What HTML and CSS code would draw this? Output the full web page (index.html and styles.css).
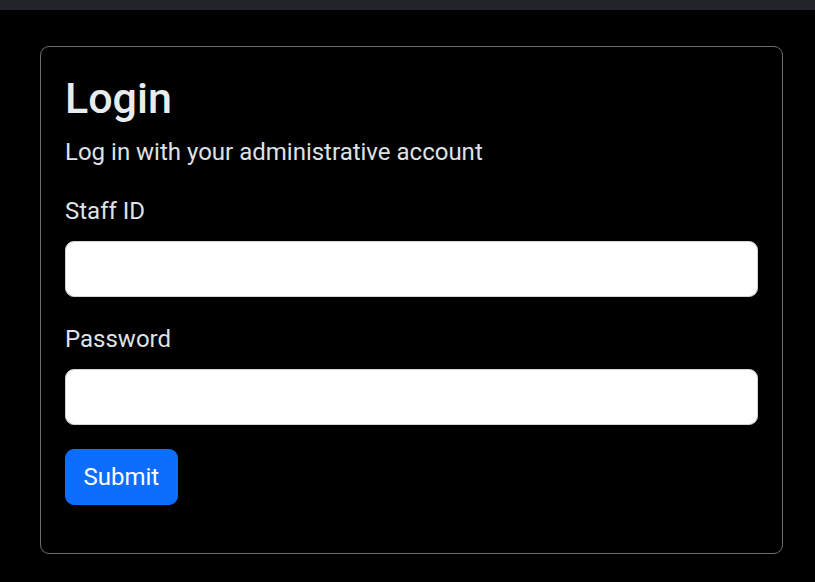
FILE: index.html
```html
<!DOCTYPE html>
<html lang="en">
<head>
<meta charset="utf-8">
<title>Login</title>
<link rel="stylesheet" href="styles.css">
</head>
<body>
<div class="topbar"></div>
<main class="page">
  <section class="card">
    <h1 class="title">Login</h1>
    <p class="lead">Log in with your administrative account</p>
    <form class="form">
      <div class="field">
        <label class="label" for="staff">Staff ID</label>
        <input class="input" id="staff" type="text">
      </div>
      <div class="field">
        <label class="label" for="pw">Password</label>
        <input class="input" id="pw" type="password">
      </div>
      <div class="actions">
        <button class="btn" type="submit">Submit</button>
      </div>
    </form>
  </section>
</main>
</body>
</html>
```
FILE: styles.css
```css
html, body {
  margin: 0;
  background: #000;
}
body {
  font-family: Roboto, "Liberation Sans", sans-serif;
  font-size: 24px;
  line-height: 36px;
  color: #dee2e6;
}
.topbar {
  height: 10px;
  background: #212529;
}
.page {
  padding: 36px 32px 0 40px;
}
.card {
  border: 1px solid #6a6d70;
  border-radius: 9px;
  padding: 24px 24px 24px;
}
.title {
  margin: 0 0 9px;
  font-size: 43px;
  line-height: 54px;
  font-weight: 500;
  color: #e9ecef;
}
.lead {
  margin: 0 0 23px;
}
.form {
  display: flex;
  flex-direction: column;
  gap: 24px;
}
.field {
  display: flex;
  flex-direction: column;
  gap: 12px;
}
.label {
  display: block;
}
.input {
  box-sizing: border-box;
  height: 56px;
  width: 100%;
  margin: 0;
  border: 1px solid #ced4da;
  border-radius: 9px;
  background: #fff;
  font: inherit;
  padding: 9px 18px;
}
.actions {
  padding-bottom: 24px;
}
.btn {
  box-sizing: border-box;
  height: 56px;
  padding: 0 17.5px;
  border: 1px solid #0d6efd;
  border-radius: 9px;
  background: #0d6efd;
  color: #fff;
  font: inherit;
  line-height: 36px;
}
```
